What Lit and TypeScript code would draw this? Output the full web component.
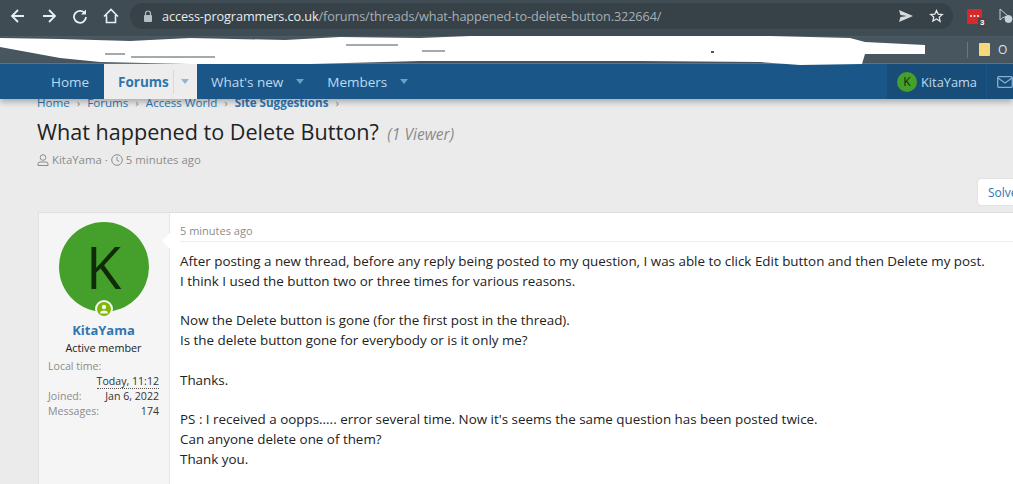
import { LitElement, html, css } from "lit";
import { customElement } from "lit/decorators.js";

@customElement("app-root")
export class AppRoot extends LitElement {
  static styles = css`
    :host { display: block; width: 1013px; height: 484px; overflow: hidden; position: relative; background: #ebebeb;
      font-family: "Open Sans", "Noto Sans", sans-serif; color: #222; }
    * { box-sizing: border-box; }
    svg { display: block; flex: none; }
    .toolbar { height: 36px; background: #3f4c54; display: flex; align-items: center; padding: 0 0 4px 10px; }
    .tb-icon { margin-right: 15px; }
    .tb-icon.last { margin-right: 11px; }
    .omni { width: 823px; height: 26px; border-radius: 13px; background: #374148; display: flex; align-items: center; padding: 0 9px 0 13px; font-size: 12.7px; letter-spacing: -0.1px; color: #a5b0b6; white-space: nowrap; }
    .omni b { font-weight: 400; color: #e8ecee; }
    .omni .url { margin-left: 9px; flex: 1; }
    .omni svg + svg { margin-left: 16px; }
    .ext { margin-left: 14px; position: relative; width: 15px; height: 15px; background: #d6282d; border-radius: 1px; }
    .ext i { position: absolute; left: 11px; top: 9px; background: #4a4543; color: #fff; font: 700 8px "Liberation Sans", sans-serif; padding: 0 2px; line-height: 10px; }
    .cursor { margin-left: 17px; }
    .bookmarks { height: 28px; background: #47565f; border-top: 1px solid #4b5a63; border-bottom: 1px solid #6a7780; display: flex; align-items: center; justify-content: flex-end; font-size: 12px; color: #dfe3e5; padding-bottom: 1px; }
    .bm-sep { width: 1px; height: 16px; background: #6b7880; margin-right: 11px; }
    .folder { width: 11px; height: 13px; background: #f5d97c; border-radius: 1px; margin-right: 8px; }
    .bm-label { width: 15px; overflow: hidden; }
    .nav { position: relative; z-index: 2; height: 35px; background: #1a5788; display: flex; align-items: stretch; font-size: 13.5px; color: #bfd9ef; box-shadow: 0 3px 6px rgba(0,0,0,.28); }
    .nav-item { display: flex; align-items: center; white-space: nowrap; }
    .home { margin-left: 51px; width: 53px; }
    .active { background: #ededed; color: #2f76b0; font-weight: 700; width: 93px; padding-left: 14px; }
    .active .sep { width: 1px; height: 24px; background: #cfdde9; margin: 0 7px 0 4px; }
    .new { margin-left: 14px; }
    .caret { width: 0; height: 0; border: 4.5px solid transparent; border-top: 5px solid #6f9fc6; border-bottom: 0; margin-left: 13px; }
    .active .caret { margin-left: 0; border-top-color: #8fb7d8; }
    .members { margin-left: 23px; }
    .spacer { flex: 1; }
    .user { background: #174d78; width: 99px; padding-left: 10px; gap: 4px; font-size: 12.8px; }
    .mini { width: 20px; height: 20px; border-radius: 50%; background: #44a02a; color: #0f2a0a; font-size: 12px; display: flex; align-items: center; justify-content: center; }
    .mail { background: #174d78; width: 26px; margin-left: 1px; padding-left: 10px; overflow: hidden; }
    .main { padding: 0 0 0 37px; }
    .crumbs { height: 11px; overflow: hidden; display: flex; align-items: flex-end; gap: 7px; font-size: 11.6px; line-height: 14px; color: #2f76b0; white-space: nowrap; }
    .crumbs b { font-weight: 700; }
    .crumbs span { color: #8c8c8c; }
    h1 { margin: 7px 0 0; font-size: 21.6px; font-weight: 400; line-height: 30px; color: #222; white-space: nowrap; }
    h1 em { font-size: 15.6px; color: #8c8c8c; margin-left: 3px; }
    .meta { margin-top: 3px; display: flex; align-items: center; gap: 3px; font-size: 11.4px; line-height: 16px; color: #8c8c8c; white-space: nowrap; }
    .solve-row { height: 25px; margin-top: 11px; display: flex; justify-content: flex-end; }
    .solve { width: 35px; height: 26px; background: #fff; border-radius: 3px 0 0 3px; box-shadow: 0 0 2px rgba(0,0,0,.12); color: #2f76b0; font-size: 12px; padding: 5px 0 0 10px; overflow: hidden; white-space: nowrap; }
    .post { display: flex; margin: 8px 0 0 1px; background: #fff; border-top: 1px solid #dfdfdf; height: 280px; }
    .side { width: 132px; flex: none; background: #f5f5f5; border-left: 1px solid #e2e2e2; border-right: 1px solid #e6e6e6; padding: 9px 10px 0 9px; display: flex; flex-direction: column; align-items: center; position: relative; }
    .arrow { position: absolute; right: -1px; top: 20px; width: 0; height: 0; border: 8px solid transparent; border-left: 0; border-right: 8px solid #fff; }
    .avatar { width: 90px; height: 90px; border-radius: 50%; background: #44a02a; color: #102a0a; font-size: 58px; line-height: 90px; text-align: center; position: relative; flex: none; }
    .online { position: absolute; left: 36px; top: 78px; width: 18px; height: 18px; border-radius: 50%; background: #7fb800; border: 2px solid #f5f5f5; display: flex; align-items: center; justify-content: center; }
    .name { margin-top: 9px; font-size: 13px; font-weight: 700; line-height: 18px; color: #2f76b0; }
    .title { margin-top: 1px; font-size: 10.8px; line-height: 16px; color: #222; }
    .stats { align-self: stretch; margin-top: 3px; font-size: 10.6px; line-height: 15px; color: #8c8c8c; }
    .stat { display: flex; justify-content: space-between; }
    .stat span:last-child { color: #333; }
    .stat .time { border-bottom: 1px dotted #555; line-height: 14px; }
    .body { flex: 1; padding: 0 0 0 10px; min-width: 0; }
    .date { height: 29px; border-bottom: 1px solid #eee; font-size: 11px; line-height: 36px; color: #8c8c8c; margin-bottom: 10px; }
    .text { font-size: 13.4px; line-height: 19.8px; color: #222; white-space: nowrap; }
    .scribble { position: absolute; left: 0; top: 0; z-index: 3; pointer-events: none; }
  `;

  render() {
    const stroke = "#e9eef0";
    return html`
      <div class="toolbar">
        <svg class="tb-icon" width="16" height="16" viewBox="0 0 16 16" fill="none" stroke="${stroke}" stroke-width="1.8"><path d="M14 8H2M8 2 2 8l6 6"/></svg>
        <svg class="tb-icon" width="16" height="16" viewBox="0 0 16 16" fill="none" stroke="${stroke}" stroke-width="1.8"><path d="M2 8h12M8 2l6 6-6 6"/></svg>
        <svg class="tb-icon" width="16" height="16" viewBox="0 0 16 16" fill="none" stroke="${stroke}" stroke-width="1.8"><path d="M13 5.5A6 6 0 1 0 14 9"/><path d="M14 1.5V6.5H9" fill="${stroke}" stroke="none"/></svg>
        <svg class="tb-icon last" width="16" height="16" viewBox="0 0 16 16" fill="none" stroke="${stroke}" stroke-width="1.6"><path d="M1 8.500 8 1.500l7 7M3.500 7v7.500h9V7"/></svg>
        <div class="omni">
          <svg width="10" height="12" viewBox="0 0 10 12" fill="#b5bec3"><rect x="1" y="5" width="8" height="7" rx="1"/><path d="M2.500 5V3.500a2.500 2.500 0 0 1 5 0V5" fill="none" stroke="#b5bec3" stroke-width="1.200"/></svg>
          <span class="url"><b>access-programmers.co.uk</b>/forums/threads/what-happened-to-delete-button.322664/</span>
          <svg width="14" height="12" viewBox="0 0 14 12" fill="#d6dbde"><path d="M0 0 14 6 0 12 1.500 7 8 6 1.500 5z"/></svg>
          <svg width="15" height="14" viewBox="0 0 24 24" fill="none" stroke="#e4e8ea" stroke-width="2.200"><path d="M12 2.500l2.900 6.400 7 .7-5.200 4.600 1.500 6.900L12 17l-6.200 3.600 1.500-6.900L2.100 9.600l7-.7z"/></svg>
        </div>
        <div class="ext"><svg width="15" height="15" viewBox="0 0 15 15" fill="#fff"><circle cx="4" cy="7" r="1"/><circle cx="7.500" cy="7" r="1"/><circle cx="11" cy="7" r="1"/></svg><i>3</i></div>
        <svg class="cursor" width="14" height="16" viewBox="0 0 14 16" fill="none" stroke="#c9d0d4"><path d="M1 1v11l3-2.500L9 8z"/><circle cx="9.500" cy="11" r="3.500" fill="#c9d0d4"/></svg>
      </div>
      <div class="bookmarks">
        <div class="bm-sep"></div><div class="folder"></div><span class="bm-label">O</span>
      </div>
      <div class="nav">
        <div class="nav-item home">Home</div>
        <div class="nav-item active">Forums<div class="sep"></div><div class="caret"></div></div>
        <div class="nav-item new">What's new<div class="caret"></div></div>
        <div class="nav-item members">Members<div class="caret"></div></div>
        <div class="spacer"></div>
        <div class="nav-item user"><div class="mini">K</div>KitaYama</div>
        <div class="nav-item mail"><svg width="16" height="12" viewBox="0 0 16 12" fill="none" stroke="#86b0d2" stroke-width="1.300"><rect x=".7" y=".7" width="14.600" height="10.600" rx="1"/><path d="M1 2l7 5 7-5"/></svg></div>
      </div>
      <div class="main">
        <div class="crumbs">Home <span>›</span> Forums <span>›</span> Access World <span>›</span> <b>Site Suggestions</b> <span>›</span></div>
        <h1>What happened to Delete Button? <em>(1 Viewer)</em></h1>
        <div class="meta">
          <svg width="12" height="12" viewBox="0 0 12 12" fill="none" stroke="#8c8c8c"><circle cx="6" cy="3.500" r="2.800"/><path d="M1 11.500V10a2 2 0 0 1 2-2h6a2 2 0 0 1 2 2v1.500z"/></svg>
          KitaYama ·
          <svg width="12" height="12" viewBox="0 0 12 12" fill="none" stroke="#8c8c8c"><circle cx="6" cy="6" r="5.300"/><path d="M6 2.800V6.300L8.300 7.500"/></svg>
          5 minutes ago
        </div>
        <div class="solve-row"><div class="solve">Solved</div></div>
        <div class="post">
          <div class="side">
            <div class="arrow"></div>
            <div class="avatar">K
              <div class="online"><svg width="10" height="10" viewBox="0 0 10 10" fill="#f5f5f5"><circle cx="5" cy="3" r="2.200"/><path d="M1 9.500a4 3 0 0 1 8 0z"/></svg></div>
            </div>
            <div class="name">KitaYama</div>
            <div class="title">Active member</div>
            <div class="stats">
              <div>Local time:</div>
              <div class="stat"><span></span><span class="time">Today, 11:12</span></div>
              <div class="stat"><span>Joined:</span><span>Jan 6, 2022</span></div>
              <div class="stat"><span>Messages:</span><span>174</span></div>
            </div>
          </div>
          <div class="body">
            <div class="date">5 minutes ago</div>
            <div class="text">
              After posting a new thread, before any reply being posted to my question, I was able to click Edit button and then Delete my post.<br>
              I think I used the button two or three times for various reasons.<br><br>
              Now the Delete button is gone (for the first post in the thread).<br>
              Is the delete button gone for everybody or is it only me?<br><br>
              Thanks.<br><br>
              PS : I received a oopps..... error several time. Now it's seems the same question has been posted twice.<br>
              Can anyone delete one of them?<br>
              Thank you.
            </div>
          </div>
        </div>
      </div>
      <svg class="scribble" width="1013" height="70" viewBox="0 0 1013 70" fill="#fff">
        <path d="M0 38 60 39 130 41 190 38 285 40 340 37 420 38 470 36 520 36 600 36 770 36 850 38 865 42 905 44 925 45 925 54 865 54 862 64 800 65 760 62 640 61 420 61 310 64 190 64 100 62 60 58 0 47z"/>
        <path d="M105 54h20M131 57h84M346 45h52M422 51h23" stroke="#47565f" stroke-width="1"/>
        <rect x="711" y="51" width="3" height="2" fill="#47565f"/>
      </svg>
    `;
  }
}
